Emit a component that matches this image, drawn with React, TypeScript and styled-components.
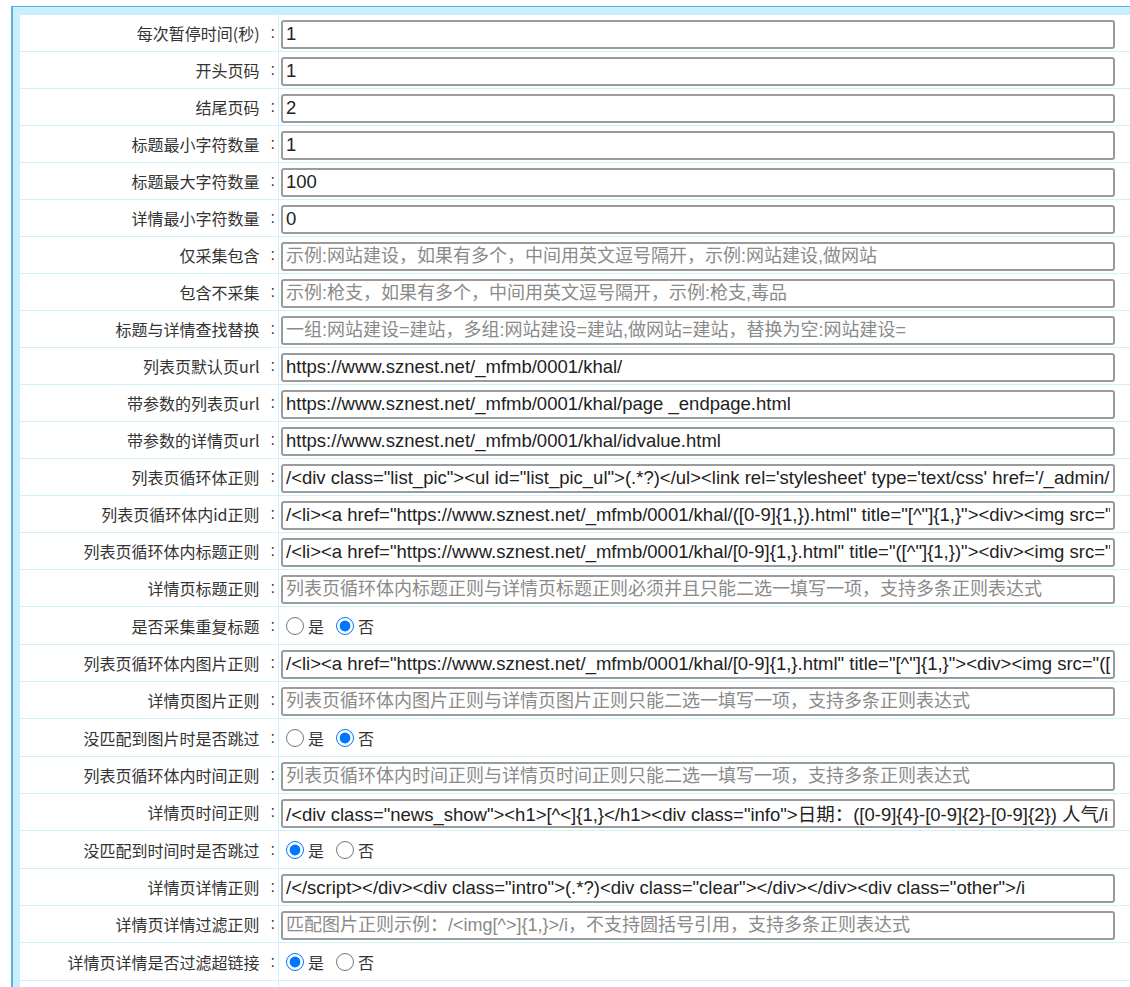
import React from 'react';
import styled, { createGlobalStyle } from 'styled-components';

const GlobalStyle = createGlobalStyle`
  html, body {
    margin: 0;
    padding: 0;
    background: #fff;
    overflow: hidden;
  }
  body {
    font-family: "Noto Sans CJK SC", "Liberation Sans", sans-serif;
    color: #333;
  }
`;

const Page = styled.div`
  padding: 6px 0 0 11px;
  width: 1160px;
`;

const Frame = styled.div`
  border-top: 1px solid #5ab3df;
  border-left: 2px solid #5ab3df;
  background: #caeefc;
  padding: 8px 0 0 7px;
`;

const Form = styled.div`
  background: #fff;
`;

const Row = styled.div<{ $radio?: boolean }>`
  display: grid;
  grid-template-columns: 259px 1fr;
  height: ${(p) => (p.$radio ? 37 : 36)}px;
  border-bottom: 1px solid #d2f0fc;
`;

const Label = styled.div`
  display: flex;
  align-items: center;
  justify-content: flex-end;
  padding-right: 3px;
  border-right: 1px solid #d2f0fc;
  font-size: 16px;
  color: #333;
  white-space: nowrap;
`;

const Colon = styled.span`
  font-family: "Liberation Sans", sans-serif;
  font-size: 16px;
  margin-left: 11px;
`;

const Field = styled.div`
  display: flex;
  align-items: center;
  padding: 2px 0 0 2px;
`;

const TextInput = styled.input`
  box-sizing: border-box;
  width: 834px;
  height: 29px;
  border: 2px solid #9b9b9b;
  border-radius: 3px;
  padding: 0 3px;
  font-family: "Liberation Sans", "Noto Sans CJK SC", sans-serif;
  font-size: 18.5px;
  color: #222;
  background: #fff;
  outline: none;

  &::placeholder {
    color: #8a8a8a;
    font-size: 18px;
  }
`;

const RadioGroup = styled.div`
  display: flex;
  align-items: center;
  gap: 12px;
  padding-left: 7px;
  font-size: 16px;
  color: #333;
`;

const RadioLabel = styled.label`
  display: flex;
  align-items: center;
  gap: 4px;
`;

const Radio = styled.input`
  width: 18px;
  height: 18px;
  margin: 0;
  accent-color: #0075ff;
`;

type Item =
  | { label: string; value?: string; placeholder?: string }
  | { label: string; radio: 'yes' | 'no' };

const items: Item[] = [
  { label: '每次暂停时间(秒)', value: '1' },
  { label: '开头页码', value: '1' },
  { label: '结尾页码', value: '2' },
  { label: '标题最小字符数量', value: '1' },
  { label: '标题最大字符数量', value: '100' },
  { label: '详情最小字符数量', value: '0' },
  {
    label: '仅采集包含',
    placeholder: '示例:网站建设，如果有多个，中间用英文逗号隔开，示例:网站建设,做网站',
  },
  {
    label: '包含不采集',
    placeholder: '示例:枪支，如果有多个，中间用英文逗号隔开，示例:枪支,毒品',
  },
  {
    label: '标题与详情查找替换',
    placeholder: '一组:网站建设=建站，多组:网站建设=建站,做网站=建站，替换为空:网站建设=',
  },
  { label: '列表页默认页url', value: 'https://www.sznest.net/_mfmb/0001/khal/' },
  { label: '带参数的列表页url', value: 'https://www.sznest.net/_mfmb/0001/khal/page _endpage.html' },
  { label: '带参数的详情页url', value: 'https://www.sznest.net/_mfmb/0001/khal/idvalue.html' },
  {
    label: '列表页循环体正则',
    value:
      "/<div class=\"list_pic\"><ul id=\"list_pic_ul\">(.*?)</ul><link rel='stylesheet' type='text/css' href='/_admin/css/list.css'>/i",
  },
  {
    label: '列表页循环体内id正则',
    value:
      '/<li><a href="https://www.sznest.net/_mfmb/0001/khal/([0-9]{1,}).html" title="[^"]{1,}"><div><img src="[^"]{1,}"/i',
  },
  {
    label: '列表页循环体内标题正则',
    value:
      '/<li><a href="https://www.sznest.net/_mfmb/0001/khal/[0-9]{1,}.html" title="([^"]{1,})"><div><img src="[^"]{1,}"/i',
  },
  {
    label: '详情页标题正则',
    placeholder: '列表页循环体内标题正则与详情页标题正则必须并且只能二选一填写一项，支持多条正则表达式',
  },
  { label: '是否采集重复标题', radio: 'no' },
  {
    label: '列表页循环体内图片正则',
    value:
      '/<li><a href="https://www.sznest.net/_mfmb/0001/khal/[0-9]{1,}.html" title="[^"]{1,}"><div><img src="([^"]{1,})"/i',
  },
  {
    label: '详情页图片正则',
    placeholder: '列表页循环体内图片正则与详情页图片正则只能二选一填写一项，支持多条正则表达式',
  },
  { label: '没匹配到图片时是否跳过', radio: 'no' },
  {
    label: '列表页循环体内时间正则',
    placeholder: '列表页循环体内时间正则与详情页时间正则只能二选一填写一项，支持多条正则表达式',
  },
  {
    label: '详情页时间正则',
    value:
      '/<div class="news_show"><h1>[^<]{1,}</h1><div class="info">日期：([0-9]{4}-[0-9]{2}-[0-9]{2}) 人气/i',
  },
  { label: '没匹配到时间时是否跳过', radio: 'yes' },
  {
    label: '详情页详情正则',
    value: '/</script></div><div class="intro">(.*?)<div class="clear"></div></div><div class="other">/i',
  },
  {
    label: '详情页详情过滤正则',
    placeholder: '匹配图片正则示例：/<img[^>]{1,}>/i，不支持圆括号引用，支持多条正则表达式',
  },
  { label: '详情页详情是否过滤超链接', radio: 'yes' },
];

const App = () => {
  return (
    <>
      <GlobalStyle />
      <Page>
        <Frame>
          <Form>
            {items.map((item, i) =>
              'radio' in item ? (
                <Row key={i} $radio>
                  <Label>
                    {item.label}
                    <Colon>:</Colon>
                  </Label>
                  <RadioGroup>
                    <RadioLabel>
                      <Radio type="radio" name={`r${i}`} defaultChecked={item.radio === 'yes'} />是
                    </RadioLabel>
                    <RadioLabel>
                      <Radio type="radio" name={`r${i}`} defaultChecked={item.radio === 'no'} />否
                    </RadioLabel>
                  </RadioGroup>
                </Row>
              ) : (
                <Row key={i}>
                  <Label>
                    {item.label}
                    <Colon>:</Colon>
                  </Label>
                  <Field>
                    <TextInput type="text" defaultValue={item.value} placeholder={item.placeholder} />
                  </Field>
                </Row>
              )
            )}
            <Row>
              <Label />
              <Field />
            </Row>
          </Form>
        </Frame>
      </Page>
    </>
  );
};

export default App;
